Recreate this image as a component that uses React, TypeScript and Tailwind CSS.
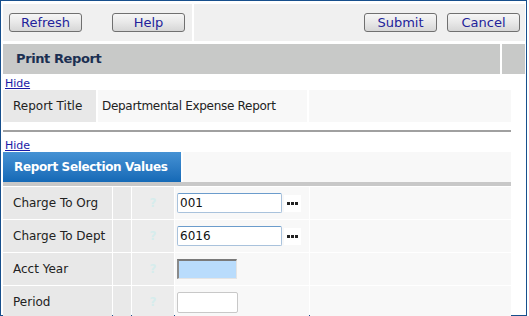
const font = "font-['DejaVu_Sans',Verdana,sans-serif]";

const Btn = ({ label, w }: { label: string; w: string }) => (
  <button
    className={`${w} h-[19px] rounded-[3px] border border-[#707070] bg-gradient-to-b from-[#f6f6f6] via-[#e8e8e8] to-[#d6d6d6] text-[13px] leading-[17px] text-[#22229a] ${font}`}
  >
    {label}
  </button>
);

const HideLink = ({ extra }: { extra?: string }) => (
  <a href="#" className={`block h-[16px] pl-[2px] pt-[4px] text-[11px] leading-[12px] text-[#1a1aa6] underline ${extra ?? ""}`}>
    Hide
  </a>
);

const Dots = () => (
  <span className="ml-[2px] flex h-[17px] w-[17px] items-center justify-center gap-[1px] bg-white">
    <span className="h-[3px] w-[3px] bg-[#222]" />
    <span className="h-[3px] w-[3px] bg-[#222]" />
    <span className="h-[3px] w-[3px] bg-[#222]" />
  </span>
);

const rows = [
  { label: "Charge To Org", value: "001", kind: "lookup" },
  { label: "Charge To Dept", value: "6016", kind: "lookup" },
  { label: "Acct Year", value: "", kind: "year" },
  { label: "Period", value: "", kind: "plain" },
];

const Row = ({ row }: any) => (
  <div className="flex h-[32px] gap-[1px]">
    <div className="flex w-[109px] items-center bg-[#e8e8e8] pl-[10px] text-[12px] text-[#222]">{row.label}</div>
    <div className="w-[18px] bg-[#e9e9e9]" />
    <div className="flex w-[42px] items-center justify-center bg-[#ececec] text-[12px] font-bold text-[#d6ecec]">?</div>
    <div className="flex w-[134px] items-center bg-[#f8f8f8] pl-[2px]">
      {row.kind === "lookup" ? (
        <>
          <div className="flex h-[20px] w-[105px] items-center rounded-[2px] border border-[#a9c2dc] border-t-[#6b9ccc] bg-white pl-[2px] text-[12px] text-[#111]">
            {row.value}
          </div>
          <Dots />
        </>
      ) : row.kind === "year" ? (
        <div className="h-[20px] w-[60px] border border-[#e4e4e4] border-t-[2px] border-l-[2px] border-t-[#7a7a7a] border-l-[#8a8a8a] bg-[#b9dcfc]" />
      ) : (
        <div className="h-[21px] w-[61px] rounded-[2px] border border-[#c8c8c8] bg-white" />
      )}
    </div>
    <div className="flex-1 bg-[#f8f8f8]" />
  </div>
);

export default function App() {
  return (
    <div className={`h-[316px] w-[527px] border border-[#174f8c] bg-white pl-[2px] pr-[1px] pt-[3px] ${font}`}>
      <div className="flex h-[37px] gap-[2px]">
        <div className="flex w-[189px] items-center gap-[30px] bg-[#f0f0f0] pl-[6px]">
          <Btn label="Refresh" w="w-[73px]" />
          <Btn label="Help" w="w-[73px]" />
        </div>
        <div className="flex flex-1 items-center justify-end gap-[10px] bg-[#f0f0f0] pr-[5px]">
          <Btn label="Submit" w="w-[73px]" />
          <Btn label="Cancel" w="w-[73px]" />
        </div>
      </div>
      <div className="mt-[3px] flex h-[30px] gap-[2px]">
        <div className="flex w-[497px] items-center bg-[#c8c9c8] pl-[13px] text-[13px] font-bold tracking-[-0.4px] text-[#1b2f52]">
          Print Report
        </div>
        <div className="flex-1 bg-[#c8c9c8]" />
      </div>
      <div className="w-[508px]">
        <HideLink />
        <div className="flex h-[32px] gap-[2px] text-[12px] text-[#222]">
          <div className="flex w-[93px] items-center bg-[#e8e8e8] pl-[10px]">Report Title</div>
          <div className="flex w-[209px] items-center bg-[#f8f8f8] pl-[4px] tracking-[-0.3px]">Departmental Expense Report</div>
          <div className="flex-1 bg-[#f8f8f8]" />
        </div>
        <div className="mt-[8px] h-[2px] bg-[#a0a0a0]" />
        <HideLink extra="mt-[4px]" />
        <div className="flex h-[30px] gap-[2px] bg-white">
          <div className="flex w-[178px] items-center bg-gradient-to-b from-[#4592d4] to-[#1469b6] pl-[11px] text-[12px] font-bold tracking-[-0.35px] text-white">
            Report Selection Values
          </div>
          <div className="flex-1 bg-[#f8f8f8]" />
        </div>
        <div className="h-[4px] bg-[#c8c8c8]" />
        <div className="mt-[1px] flex flex-col gap-[1px]">
          {rows.map((r) => (
            <Row key={r.label} row={r} />
          ))}
        </div>
      </div>
    </div>
  );
}
